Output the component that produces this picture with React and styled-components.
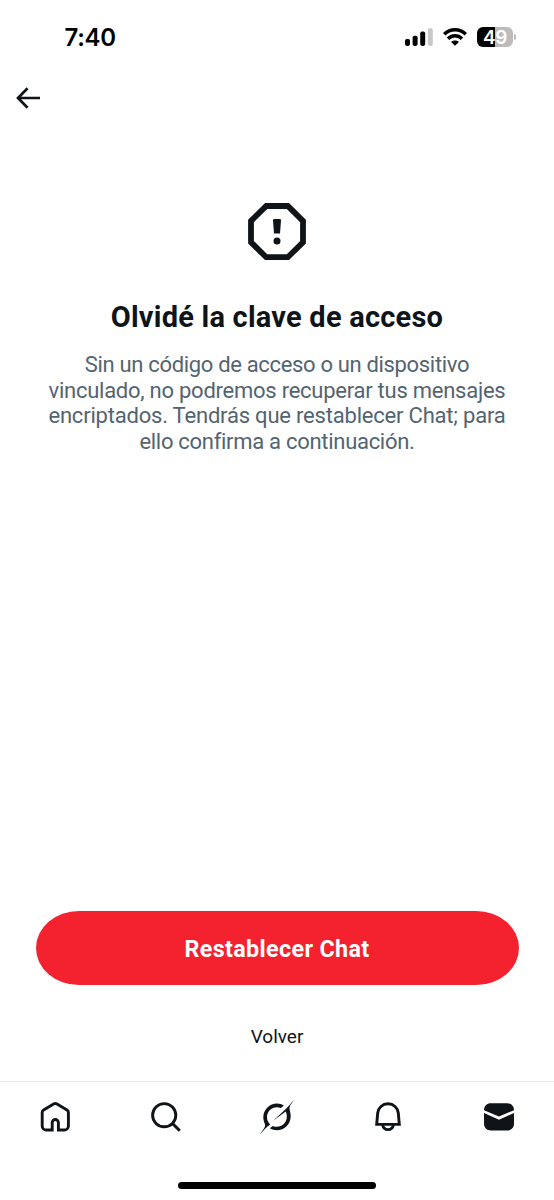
import React from "react";
import styled, { createGlobalStyle } from "styled-components";

const GlobalStyle = createGlobalStyle`
  * {
    box-sizing: border-box;
  }

  body {
    margin: 0;
    background-color: #fff;
  }
`;

const Screen = styled.div`
  width: 554px;
  height: 1200px;
  display: flex;
  flex-direction: column;
  overflow: hidden;
  background-color: #fff;
  color: #0f1419;
  font-family: Roboto, sans-serif;
`;

const StatusBar = styled.header`
  height: 74px;
  flex: none;
  display: flex;
  align-items: center;
  justify-content: space-between;
  padding: 0 38px 0 64.5px;
  color: #000;
`;

const Clock = styled.span`
  font-family: Inter, sans-serif;
  font-size: 24px;
  font-weight: 600;
  line-height: 30px;
  letter-spacing: -0.3px;
  padding-top: 2px;
`;

const StatusIcons = styled.div`
  display: flex;
  align-items: center;
  gap: 10px;
`;

const BatteryWrap = styled.div`
  display: flex;
  align-items: center;
  gap: 1px;
`;

const Battery = styled.div`
  width: 36px;
  height: 20px;
  border-radius: 6px;
  background: linear-gradient(to right, #000 49%, #bcbcbc 49%);
  color: #fff;
  font-family: Inter, sans-serif;
  font-size: 19px;
  font-weight: 600;
  line-height: 21px;
  text-align: center;
  letter-spacing: -0.5px;
`;

const BatteryTip = styled.div`
  width: 2px;
  height: 6px;
  border-radius: 0 2px 2px 0;
  background-color: #bcbcbc;
`;

const NavBar = styled.nav`
  height: 48px;
  flex: none;
  display: flex;
  align-items: center;
  padding-left: 16px;
`;

const Icon = styled.svg`
  display: block;
  flex: none;
  fill: none;
  stroke: ${(props) => props.$stroke || "none"};
  stroke-width: ${(props) => props.$weight || 2.9};
`;

const Content = styled.main`
  flex: 1;
  display: flex;
  flex-direction: column;
  align-items: center;
  padding-top: 81px;
`;

const Title = styled.h1`
  margin: 38px 0 0;
  font-size: 29px;
  font-weight: 700;
  line-height: 36px;
  letter-spacing: 0.22px;
  white-space: nowrap;
`;

const Description = styled.p`
  margin: 17px 0 0;
  color: #536471;
  font-size: 22px;
  line-height: 25.6px;
  text-align: center;
`;

const Line = styled.span`
  display: block;
  white-space: nowrap;
  letter-spacing: ${(props) => props.$spacing};
`;

const Actions = styled.footer`
  flex: none;
  height: 170px;
  display: flex;
  flex-direction: column;
  align-items: center;
`;

const ResetButton = styled.button`
  width: 483px;
  height: 74px;
  flex: none;
  border: 0;
  padding: 2px 0 0;
  border-radius: 43px / 37px;
  background-color: #f4212e;
  color: #fff;
  font-family: inherit;
  font-size: 23.3px;
  font-weight: 700;
  line-height: 72px;
  letter-spacing: 0.35px;
`;

const BackButton = styled.button`
  margin-top: 36px;
  border: 0;
  padding: 0;
  background: none;
  color: #0f1419;
  font-family: inherit;
  font-size: 19px;
  line-height: 32px;
`;

const TabBar = styled.nav`
  flex: none;
  height: 71px;
  display: grid;
  grid-template-columns: repeat(5, 1fr);
  align-items: center;
  justify-items: center;
  border-top: 1px solid #e4e9ec;
`;

const HomeArea = styled.div`
  flex: none;
  height: 48px;
  display: flex;
  justify-content: center;
  padding-top: 29.5px;
`;

const HomeIndicator = styled.div`
  width: 198px;
  height: 7px;
  border-radius: 4px;
  background-color: #000;
`;

const lines = [
  ["Sin un código de acceso o un dispositivo", "-0.33px"],
  ["vinculado, no podremos recuperar tus mensajes", "-0.25px"],
  ["encriptados. Tendrás que restablecer Chat; para", "-0.2px"],
  ["ello confirma a continuación.", "-0.29px"],
];

const SignalIcon = () => (
  <Icon width="28" height="18" viewBox="0 0 28 18">
    <rect x="0" y="10.9" width="5" height="7" rx="1.8" fill="#000" />
    <rect x="7.6" y="7.7" width="5" height="10.2" rx="1.8" fill="#000" />
    <rect x="15.2" y="3.6" width="5" height="14.3" rx="1.8" fill="#000" />
    <rect x="22.8" y="0.2" width="5" height="17.7" rx="1.8" fill="#c8c8c8" />
  </Icon>
);

const WifiIcon = () => (
  <Icon width="24" height="18" viewBox="0 0 24 18" $stroke="#000" $weight={3.4}>
    <path d="M1.2 6.2C7.3 0.2 16.7 0.2 22.8 6.2" />
    <path d="M5 10.7c4-4 10-4 14 0" />
    <path d="M12 17.8l-3.9-3.9c2.1-2 5.7-2 7.8 0z" fill="#000" stroke="none" />
  </Icon>
);

const HomeIcon = () => (
  <Icon width="36" height="36" viewBox="0 0 36 36" $stroke="#0f1419">
    <path d="M15.2 31H9.2A4 4 0 0 1 5.2 27V13.6q0-1.7 1.4-2.6L17 4.8q1.3-.7 2.6 0L30 11q1.4.9 1.4 2.6V27a4 4 0 0 1-4 4H21.4V23.6a3.1 3.1 0 0 0-6.2 0z" />
  </Icon>
);

const SearchIcon = () => (
  <Icon width="36" height="36" viewBox="0 0 36 36" $stroke="#0f1419">
    <circle cx="16.2" cy="16.2" r="11.6" />
    <path d="M24.4 24.4l7.4 7.4" />
  </Icon>
);

const GrokIcon = () => (
  <Icon width="36" height="36" viewBox="0 0 36 36">
    <g fill="#0f1419">
      <path d="M14.2 21.8L27.3 9.6C29.9 7 32.1 4 35.2.8c-1.8 2.9-4.5 5.4-4.7 8.1-.1 2.3 1.3 4.8 1.2 8.6-.1 7.9-6.3 13.8-13.7 13.8-2.8 0-5.2-.7-7.2-2l3-2.3c6.1 2.7 14.1-1.3 14-9.4 0-2-.4-3.4-1.1-5z" />
      <path d="M24.9 6.6l-3 2.5C15 6.1 8 11.2 8 18c0 2.1.5 3.9 1.6 5.5l1.6 2.1C7.6 28 4.2 31.9.7 35.4c2-3.2 4.8-6 5.4-8.5.4-2-1.9-4.4-1.8-8.9C4.5 10.4 10.6 4.4 18 4.4c2.6 0 5 .8 6.9 2.2z" />
    </g>
  </Icon>
);

const BellIcon = () => (
  <Icon width="36" height="36" viewBox="0 0 36 36" $stroke="#0f1419">
    <path d="M18 4.8C12.4 4.8 8.2 8.8 7.7 14L6.7 25.4H29.3L28.3 14C27.8 8.8 23.6 4.8 18 4.8z" />
    <path d="M12.6 26c.6 2.9 2.8 4.6 5.4 4.6s4.8-1.7 5.4-4.6" />
  </Icon>
);

const MailIcon = () => (
  <Icon width="36" height="36" viewBox="0 0 36 36">
    <g fill="#0f1419">
      <path d="M3 11.2C3.1 7 5.8 4.3 10 4.3H26c4.2 0 6.9 2.7 7 6.9L18 17.4z" />
      <path d="M3 14L18 20.7 33 14V24.5c0 4.2-2.8 7-7 7H10c-4.2 0-7-2.8-7-7z" />
    </g>
  </Icon>
);

const App = () => {
  return (
    <>
      <GlobalStyle />
      <Screen>
        <StatusBar>
          <Clock>7:40</Clock>
          <StatusIcons>
            <SignalIcon />
            <WifiIcon />
            <BatteryWrap>
              <Battery>49</Battery>
              <BatteryTip />
            </BatteryWrap>
          </StatusIcons>
        </StatusBar>
        <NavBar>
          <Icon
            width="25"
            height="22"
            viewBox="0 0 25 22"
            $stroke="#0f1419"
            $weight={2.7}
          >
            <path d="M24 11H2.3M11.6 1.3L2 11l9.6 9.7" />
          </Icon>
        </NavBar>
        <Content>
          <Icon
            width="58"
            height="58"
            viewBox="0 0 58 58"
            $stroke="#0f1419"
            $weight={5.8}
          >
            <path d="M18.2 3H39.8L55 18V39.2L39.8 54.2H18.2L3 39.2V18z" />
            <path
              d="M26.3 16H31.7q1.4 0 1.3 1.4L32 30.6H26L25 17.4q-.1-1.4 1.3-1.4z"
              fill="#0f1419"
              stroke="none"
            />
            <circle cx="29" cy="38" r="3.5" fill="#0f1419" stroke="none" />
          </Icon>
          <Title>Olvidé la clave de acceso</Title>
          <Description>
            {lines.map(([text, spacing]) => (
              <Line key={text} $spacing={spacing}>
                {text}
              </Line>
            ))}
          </Description>
        </Content>
        <Actions>
          <ResetButton>Restablecer Chat</ResetButton>
          <BackButton>Volver</BackButton>
        </Actions>
        <TabBar>
          <HomeIcon />
          <SearchIcon />
          <GrokIcon />
          <BellIcon />
          <MailIcon />
        </TabBar>
        <HomeArea>
          <HomeIndicator />
        </HomeArea>
      </Screen>
    </>
  );
};

export default App;
